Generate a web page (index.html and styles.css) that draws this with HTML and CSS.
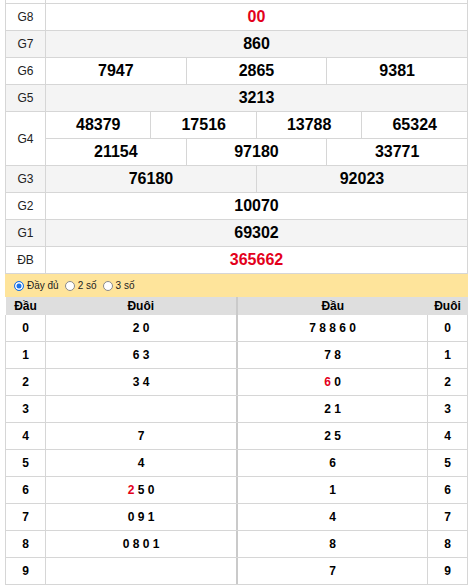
FILE: index.html
```html
<!DOCTYPE html>
<html>
<head>
<meta charset="utf-8">
<link rel="stylesheet" href="styles.css">
</head>
<body>
<div class="wrap">
<table class="kq">
  <colgroup>
    <col class="c-lbl">
    <col><col><col><col><col><col><col><col><col><col><col><col>
  </colgroup>
  <tr class="cut"><td></td><td colspan="12"></td></tr>
  <tr><td class="lbl">G8</td><td colspan="12" class="num red">00</td></tr>
  <tr class="alt"><td class="lbl">G7</td><td colspan="12" class="num">860</td></tr>
  <tr><td class="lbl">G6</td><td colspan="4" class="num">7947</td><td colspan="4" class="num">2865</td><td colspan="4" class="num">9381</td></tr>
  <tr class="alt"><td class="lbl">G5</td><td colspan="12" class="num">3213</td></tr>
  <tr><td class="lbl" rowspan="2">G4</td><td colspan="3" class="num">48379</td><td colspan="3" class="num">17516</td><td colspan="3" class="num">13788</td><td colspan="3" class="num">65324</td></tr>
  <tr><td colspan="4" class="num">21154</td><td colspan="4" class="num">97180</td><td colspan="4" class="num">33771</td></tr>
  <tr class="alt"><td class="lbl">G3</td><td colspan="6" class="num">76180</td><td colspan="6" class="num">92023</td></tr>
  <tr><td class="lbl">G2</td><td colspan="12" class="num">10070</td></tr>
  <tr class="alt"><td class="lbl">G1</td><td colspan="12" class="num">69302</td></tr>
  <tr><td class="lbl">ĐB</td><td colspan="12" class="num red">365662</td></tr>
</table>

<div class="opts">
  <span class="opt"><span class="radio on"></span>Đầy đủ</span>
  <span class="opt"><span class="radio"></span>2 số</span>
  <span class="opt"><span class="radio"></span>3 số</span>
</div>

<div class="loto">
  <table class="lt left">
    <colgroup><col class="c-k"><col></colgroup>
    <tr class="hd"><th>Đầu</th><th>Đuôi</th></tr>
    <tr><td class="k">0</td><td>2 0</td></tr>
    <tr><td class="k">1</td><td>6 3</td></tr>
    <tr><td class="k">2</td><td>3 4</td></tr>
    <tr><td class="k">3</td><td></td></tr>
    <tr><td class="k">4</td><td>7</td></tr>
    <tr><td class="k">5</td><td>4</td></tr>
    <tr><td class="k">6</td><td><span class="red">2</span> 5 0</td></tr>
    <tr><td class="k">7</td><td>0 9 1</td></tr>
    <tr><td class="k">8</td><td>0 8 0 1</td></tr>
    <tr><td class="k">9</td><td></td></tr>
  </table>
  <table class="lt right">
    <colgroup><col><col class="c-k"></colgroup>
    <tr class="hd"><th>Đầu</th><th>Đuôi</th></tr>
    <tr><td>7 8 8 6 0</td><td class="k">0</td></tr>
    <tr><td>7 8</td><td class="k">1</td></tr>
    <tr><td><span class="red">6</span> 0</td><td class="k">2</td></tr>
    <tr><td>2 1</td><td class="k">3</td></tr>
    <tr><td>2 5</td><td class="k">4</td></tr>
    <tr><td>6</td><td class="k">5</td></tr>
    <tr><td>1</td><td class="k">6</td></tr>
    <tr><td>4</td><td class="k">7</td></tr>
    <tr><td>8</td><td class="k">8</td></tr>
    <tr><td>7</td><td class="k">9</td></tr>
  </table>
</div>
</div>
</body>
</html>
```
FILE: styles.css
```css
html, body {
  margin: 0;
  padding: 0;
  background: #fff;
}
body {
  font-family: "Liberation Sans", Arial, sans-serif;
  color: #000;
}
.wrap {
  width: 463px;
  margin-left: 5px;
}
.kq {
  width: 463px;
  border-collapse: collapse;
  table-layout: fixed;
}
.c-lbl { width: 40px; }
.kq td {
  border: 1px solid #d6d6d6;
  height: 26px;
  padding: 0;
  text-align: center;
  vertical-align: middle;
}
.kq tr.cut td {
  height: 3px;
  border-top: 0;
}
.kq tr.alt td {
  background: #f4f4f4;
}
.kq td.lbl {
  font-size: 12px;
  color: #222;
}
.kq td.num {
  font-size: 16px;
  font-weight: bold;
}
.red { color: #e3001b; }

.opts {
  height: 23px;
  background: #fee49b;
  display: flex;
  align-items: center;
  padding-left: 9px;
  font-size: 10px;
  color: #222;
  gap: 6px;
}
.opt {
  display: flex;
  align-items: center;
  gap: 3px;
}
.radio {
  width: 8px;
  height: 8px;
  border-radius: 50%;
  border: 1px solid #8a8a8a;
  background: #fff;
  box-sizing: content-box;
}
.radio.on {
  border-color: #1a73e8;
  background: #1a73e8;
  box-shadow: inset 0 0 0 1.5px #fff;
}
.loto {
  display: flex;
}
.lt {
  border-collapse: collapse;
  table-layout: fixed;
}
.lt.left { width: 232px; }
.lt.right { width: 231px; }
.c-k { width: 40px; }
.lt th {
  background: #dedede;
  height: 18px;
  padding: 0;
  font-size: 12px;
  font-weight: bold;
  text-align: center;
  border: 0;
}
.lt.left th:last-child { border-right: 1px solid #cacaca; }
.lt.right th:first-child { border-left: 1px solid #cacaca; }
.lt td {
  border: 1px solid #d6d6d6;
  height: 26px;
  padding: 0;
  font-size: 12px;
  font-weight: bold;
  text-align: center;
  vertical-align: middle;
}
.lt.left td:last-child { border-right-color: #cacaca; }
.lt.right td:first-child { border-left-color: #cacaca; }
.lt tr.hd + tr td { border-top: 0; }
```
